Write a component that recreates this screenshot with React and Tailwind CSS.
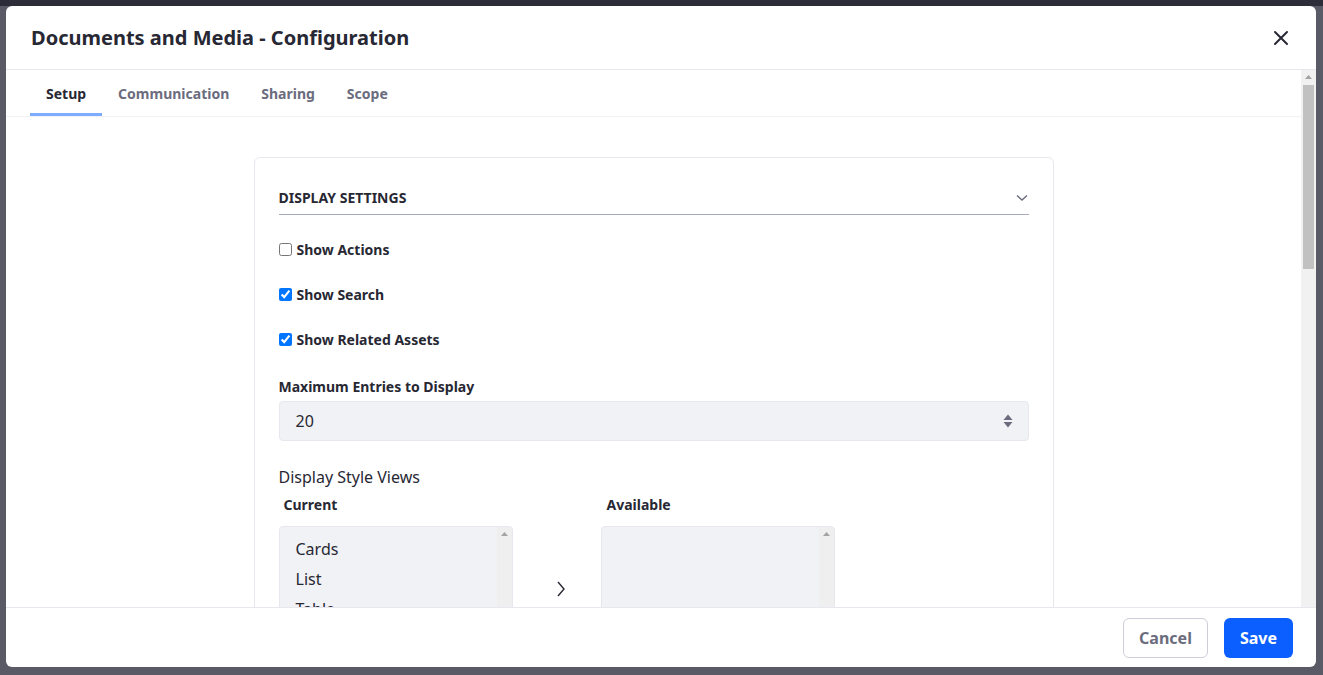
import React from 'react'

const tabs = ['Setup', 'Communication', 'Sharing', 'Scope']

const checks = [
    { label: 'Show Actions', checked: false },
    { label: 'Show Search', checked: true },
    { label: 'Show Related Assets', checked: true },
]

// small grey arrow used by the drawn scrollbars
const ScrollUp = () => (
    <svg width="15" height="15" viewBox="0 0 15 15" className="shrink-0">
        <path d="M7.5 5 L11 9 H4 Z" fill="#a3a3a3" />
    </svg>
)

const ListBox = ({ items }) => (
    <div className="flex h-[126px] w-[234px] overflow-hidden rounded-[4px] border border-[#e7e7ed] bg-[#f1f2f5]">
        <div className="flex-1 pt-[7px]">
            {items.map((item) => (
                <div key={item} className="h-[30px] pl-[16px] text-[16px] leading-[30px] text-[#272833]">
                    {item}
                </div>
            ))}
        </div>
        <div className="w-[15px] bg-[#efefef]">
            <ScrollUp />
        </div>
    </div>
)

const App = () => {
    return (
        <div className="h-[675px] w-full overflow-hidden bg-[linear-gradient(#2d2d3a_0_6px,#5a5966_6px)] p-[6px] font-['Noto_Sans',sans-serif]">
            <div className="flex h-[661px] w-[1310px] flex-col overflow-hidden rounded-[6px] bg-white">
                {/* header */}
                <div className="flex h-[64px] shrink-0 items-center justify-between border-b border-[#e7e7ed] pl-[25px] pr-[27px]">
                    <h1 className="text-[20px] font-bold text-[#272833]">Documents and Media - Configuration</h1>
                    <svg width="16" height="16" viewBox="0 0 16 16" fill="none">
                        <path d="M2 2 L14 14 M14 2 L2 14" stroke="#272833" strokeWidth="2" strokeLinecap="round" />
                    </svg>
                </div>

                {/* body */}
                <div className="flex min-h-0 flex-1">
                    <div className="flex-1 overflow-hidden">
                        <div className="flex h-[47px] border-b border-[#f1f2f5] pl-[24px]">
                            {tabs.map((tab, i) => (
                                <div
                                    key={tab}
                                    className={
                                        i === 0
                                            ? 'flex items-center px-[16px] text-[14px] font-bold text-[#272833] shadow-[inset_0_-3px_0_#80acff]'
                                            : 'flex items-center px-[16px] text-[14px] font-bold text-[#6b6c7e]'
                                    }
                                >
                                    {tab}
                                </div>
                            ))}
                        </div>

                        <div className="pt-10">
                            <div className="mx-auto w-[800px] rounded-[6px] border border-[#e7e7ed] px-[24px] pt-[24px] pb-[40px]">
                                <div className="flex h-[33px] items-center justify-between border-b border-[#a7a9bc] pb-[1px]">
                                    <span className="text-[14px] font-bold uppercase text-[#272833]">Display Settings</span>
                                    <svg width="12" height="8" viewBox="0 0 12 8" fill="none" className="mr-[1px]">
                                        <path d="M1 1.5 L6 6 L11 1.5" stroke="#6b6c7e" strokeWidth="1.4" />
                                    </svg>
                                </div>

                                <div className="mt-[24px] flex flex-col gap-[24px]">
                                    {checks.map((c) => (
                                        <label key={c.label} className="flex h-[21px] items-center text-[14px] font-bold text-[#272833]">
                                            <input type="checkbox" defaultChecked={c.checked} className="mr-[5px] h-[13px] w-[13px]" />
                                            {c.label}
                                        </label>
                                    ))}
                                </div>

                                <div className="mt-[26px]">
                                    <div className="mb-[4px] text-[14px] font-bold leading-[21px] text-[#272833]">Maximum Entries to Display</div>
                                    <div className="flex h-[40px] items-center justify-between rounded-[4px] border border-[#e7e7ed] bg-[#f1f2f5] pl-[16px] pr-[15px]">
                                        <span className="text-[16px] text-[#272833]">20</span>
                                        <svg width="10" height="14" viewBox="0 0 10 14">
                                            <path d="M5 0.5 L9.5 6 H0.5 Z" fill="#6b6c7e" />
                                            <path d="M5 13.5 L9.5 8 H0.5 Z" fill="#6b6c7e" />
                                        </svg>
                                    </div>
                                </div>

                                <div className="mt-[24px] text-[16px] leading-[24px] text-[#272833]">Display Style Views</div>

                                <div className="mt-[5px] flex items-start">
                                    <div>
                                        <div className="mb-[11px] pl-[5px] text-[14px] font-bold leading-[21px] text-[#272833]">Current</div>
                                        <ListBox items={['Cards', 'List', 'Table']} />
                                    </div>
                                    <div className="flex h-[126px] w-[88px] items-center self-end pl-[43px]">
                                        <svg width="10" height="18" viewBox="0 0 10 18" fill="none">
                                            <path d="M2 2 L8 9 L2 16" stroke="#272833" strokeWidth="1.4" />
                                        </svg>
                                    </div>
                                    <div>
                                        <div className="mb-[11px] pl-[6px] text-[14px] font-bold leading-[21px] text-[#272833]">Available</div>
                                        <ListBox items={[]} />
                                    </div>
                                </div>
                            </div>
                        </div>
                    </div>

                    {/* drawn scrollbar of the body */}
                    <div className="flex w-[15px] shrink-0 flex-col bg-[#f1f1f1]">
                        <ScrollUp />
                        <div className="mx-[2px] h-[184px] bg-[#c1c1c1]" />
                    </div>
                </div>

                {/* footer */}
                <div className="flex h-[60px] shrink-0 items-center justify-end gap-4 border-t border-[#e7e7ed] pr-[23px]">
                    <button className="h-[40px] rounded-[6px] border border-[#cdced9] bg-white px-[15px] text-[16px] font-bold text-[#6b6c7e]">
                        Cancel
                    </button>
                    <button className="h-[40px] rounded-[6px] bg-[#0b5fff] px-[16px] text-[16px] font-bold text-white">
                        Save
                    </button>
                </div>
            </div>
        </div>
    )
}

export default App
